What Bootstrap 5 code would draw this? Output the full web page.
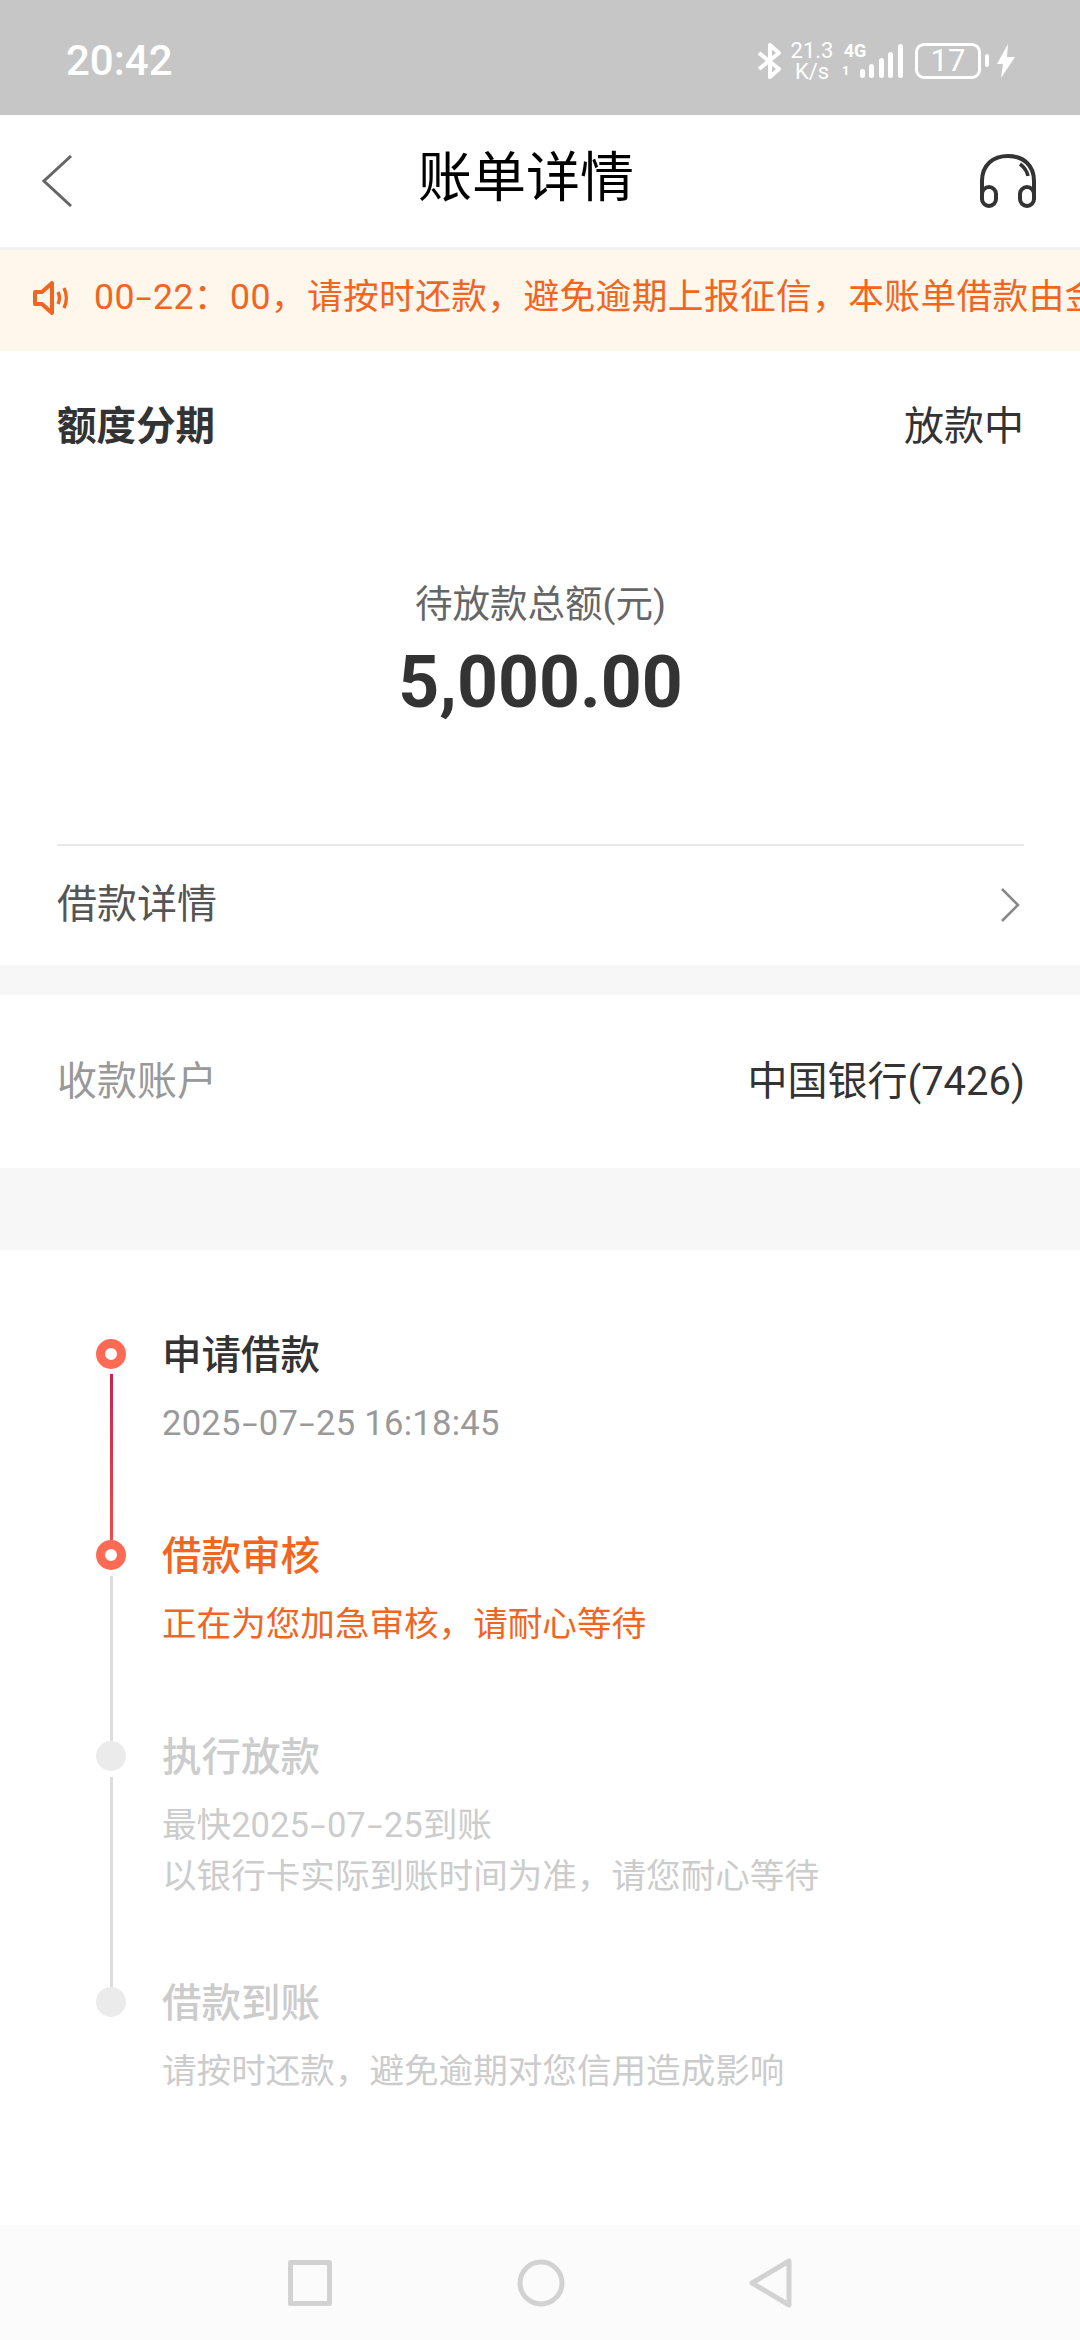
<!DOCTYPE html>
<html lang="zh-CN">

<head>
    <meta charset="UTF-8">
    <title>账单详情</title>
    <meta name="viewport" content="width=device-width,initial-scale=1">
    <link href="https://cdn.jsdelivr.net/npm/bootstrap@5.3.3/dist/css/bootstrap.min.css" rel="stylesheet">
    <style>
        html, body { margin: 0; height: 2340px; overflow: hidden; }
        body { font-family: Roboto, "Noto Sans CJK SC", sans-serif; background: #fff; color: #333; width: 1080px; }
        .phone-status { height: 115px; background: #c6c6c6; color: #fff; padding: 6px 65px 0 66px; }
        .phone-clock { font-size: 42px; font-weight: 500; }
        .net-speed { font-size: 22px; line-height: 21px; text-align: center; width: 46px; margin: 0 7px 0 8px; }
        .net-type { font-size: 18px; font-weight: 700; line-height: 17px; width: 26px; }
        .net-sim { font-size: 13px; display: block; text-align: left; margin-top: 3px; }
        .batt-box { width: 66px; height: 36px; border: 3px solid #fff; border-radius: 9px; font-size: 31px; line-height: 30px; text-align: center; margin-left: 11px; }
        .app-head { height: 135px; border-bottom: 3px solid #f1f1f1; padding: 0 43px 0 42px; }
        .app-title { font-size: 54px; color: #000; margin-left: 346px; line-height: 1; white-space: nowrap; margin-top: -4px; }
        .notice-bar { height: 101px; background: #fff6ec; color: #f0651f; font-size: 35.7px; padding: 0 0 5px 33px; white-space: nowrap; overflow: hidden; letter-spacing: .4px; }
        .notice-text { margin-left: 9px; }
        .sum-wrap { height: 614px; padding: 0 56px 0 57px; }
        .sum-head { height: 152px; font-size: 40px; }
        .sum-kind { font-weight: 700; font-size: 39.5px; }
        .sum-label { font-size: 37.5px; color: #666; line-height: 1; margin-top: 83px; text-align: center; }
        .sum-value { font-size: 71.5px; font-weight: 700; line-height: 1; margin-top: 23px; text-align: center; }
        .sum-link { border-top: 2px solid #e8e8e8; margin-top: 126px; height: 116px; padding-top: 3px; font-size: 40px; color: #555; }
        .gap-a { height: 30px; background: #f7f7f7; }
        .gap-b { height: 82px; background: #f7f7f7; }
        .acct-row { height: 173px; padding: 0 55px 0 57px; font-size: 40px; }
        .acct-label { color: #999; }
        .steps-wrap { height: 975px; padding: 89px 0 0 96px; }
        .step-item { display: flex; }
        .step-rail { width: 30px; margin-right: 36px; display: flex; flex-direction: column; align-items: center; }
        .step-dot { width: 30px; height: 30px; border-radius: 50%; flex: none; }
        .dot-on { background: #fff; border: 9px solid #ff6a55; }
        .dot-off { background: #ebebeb; }
        .step-line { width: 3px; flex-grow: 1; background: #ddd; margin-top: 6px; }
        .line-red { background: linear-gradient(#c9224e, #f04a4a); margin-top: 5px; }
        .step-title { font-size: 39.5px; line-height: 33px; font-weight: 500; }
        .step-sub { font-size: 34.6px; line-height: 51px; margin-top: 26px; }
        .date-sub { letter-spacing: .25px; }
        .s1 { height: 201px; }
        .s2 { height: 201px; }
        .s3 { height: 246px; }
        .c-done { color: #333; }
        .c-gray { color: #999; }
        .c-orange { color: #f0651f; }
        .c-off { color: #ccc; }
        /* the reference font has a much wider hyphen than Roboto */
        .wide-dash { display: inline-block; width: 18px; text-align: center; transform: scaleX(1.6); }
        .sys-nav { height: 115px; background: #fbfbfb; padding: 0 287px 0 288px; }
    </style>
</head>

<body>
    <div class="phone-status d-flex align-items-center">
        <div class="phone-clock me-auto">20:42</div>
        <svg width="24" height="36" viewBox="0 0 24 36" fill="none" stroke="#fff" stroke-width="4" stroke-linejoin="round"><path d="M2 10l20 16-9 8V2l9 8L2 26"/></svg>
        <div class="net-speed">21.3<br>K/s</div>
        <div class="net-type text-center">4G<span class="net-sim">1</span></div>
        <svg width="44" height="34" viewBox="0 0 44 34" fill="#fff" style="margin-left:-8px"><rect x="0" y="25" width="5" height="9" rx="2.500"/><rect x="9" y="20" width="5" height="14" rx="2.500"/><rect x="19" y="14" width="5" height="20" rx="2.500"/><rect x="28" y="8" width="5" height="26" rx="2.500"/><rect x="38" y="0" width="5" height="34" rx="2.500"/></svg>
        <div class="batt-box">17</div>
        <svg width="5" height="13" class="ms-1"><rect width="4" height="13" rx="2" fill="#fff"/></svg>
        <svg width="18" height="34" viewBox="0 0 18 34" fill="#fff" style="margin-left:7px"><path d="M11 0L0 20h6L4 34l14-21h-8z"/></svg>
    </div>

    <div class="app-head d-flex align-items-center">
        <svg width="30" height="52" viewBox="0 0 30 52" fill="none" stroke="#666" stroke-width="3"><path d="M29 1L2 26l27 25"/></svg>
        <div class="app-title">账单详情</div>
        <svg width="58" height="54" viewBox="0 0 58 54" fill="none" stroke="#333" stroke-width="4" class="ms-auto"><path d="M3 42V27C3 11 14 2 29 2s26 9 26 25v15"/><path d="M41 10c4 3 7 7 8 12" stroke-width="3.500"/><rect x="3" y="33" width="14" height="19" rx="7"/><rect x="41" y="33" width="14" height="19" rx="7"/></svg>
    </div>

    <div class="notice-bar d-flex align-items-center">
        <svg width="36" height="34" viewBox="0 0 36 34" fill="none" stroke="#f0651f" stroke-width="4" stroke-linejoin="round" class="me-3" style="flex:none"><path d="M2 11h7l10-9v30l-10-9H2z"/><path d="M25 11c2 4 2 8 0 12M31 7c3 6 3 14 0 20" stroke-width="3.500"/></svg>
        <span class="notice-text">00<span class="wide-dash">-</span>22：00，请按时还款，避免逾期上报征信，本账单借款由金</span>
    </div>

    <section class="sum-wrap">
        <div class="sum-head d-flex justify-content-between align-items-center">
            <span class="sum-kind">额度分期</span>
            <span>放款中</span>
        </div>
        <div class="sum-label">待放款总额(元)</div>
        <div class="sum-value">5,000.00</div>
        <div class="sum-link d-flex justify-content-between align-items-center">
            <span>借款详情</span>
            <svg width="20" height="34" viewBox="0 0 20 34" fill="none" stroke="#888" stroke-width="2.500" class="me-1"><path d="M2 1l16 16L2 33"/></svg>
        </div>
    </section>
    <div class="gap-a"></div>

    <section class="acct-row d-flex justify-content-between align-items-center">
        <span class="acct-label">收款账户</span>
        <span>中国银行(7426)</span>
    </section>
    <div class="gap-b"></div>

    <section class="steps-wrap">
        <div class="step-item s1">
            <div class="step-rail"><span class="step-dot dot-on"></span><span class="step-line line-red"></span></div>
            <div>
                <div class="step-title c-done">申请借款</div>
                <div class="step-sub date-sub c-gray">2025<span class="wide-dash">-</span>07<span class="wide-dash">-</span>25 16:18:45</div>
            </div>
        </div>
        <div class="step-item s2">
            <div class="step-rail"><span class="step-dot dot-on"></span><span class="step-line"></span></div>
            <div>
                <div class="step-title c-orange">借款审核</div>
                <div class="step-sub c-orange">正在为您加急审核，请耐心等待</div>
            </div>
        </div>
        <div class="step-item s3">
            <div class="step-rail"><span class="step-dot dot-off"></span><span class="step-line"></span></div>
            <div>
                <div class="step-title c-off">执行放款</div>
                <div class="step-sub c-off">最快2025<span class="wide-dash">-</span>07<span class="wide-dash">-</span>25到账<br>以银行卡实际到账时间为准，请您耐心等待</div>
            </div>
        </div>
        <div class="step-item">
            <div class="step-rail"><span class="step-dot dot-off"></span></div>
            <div>
                <div class="step-title c-off">借款到账</div>
                <div class="step-sub c-off">请按时还款，避免逾期对您信用造成影响</div>
            </div>
        </div>
    </section>

    <nav class="sys-nav d-flex justify-content-between align-items-center">
        <svg width="44" height="46" viewBox="0 0 44 46" fill="none" stroke="#d2d2d2" stroke-width="5" stroke-linejoin="round"><rect x="2.500" y="2.500" width="39" height="41"/></svg>
        <svg width="48" height="48" viewBox="0 0 48 48" fill="none" stroke="#d2d2d2" stroke-width="5"><circle cx="24" cy="24" r="21"/></svg>
        <svg width="44" height="50" viewBox="0 0 44 50" fill="none" stroke="#d2d2d2" stroke-width="5" stroke-linejoin="round"><path d="M40 3v44L3 25z"/></svg>
    </nav>
</body>

</html>
